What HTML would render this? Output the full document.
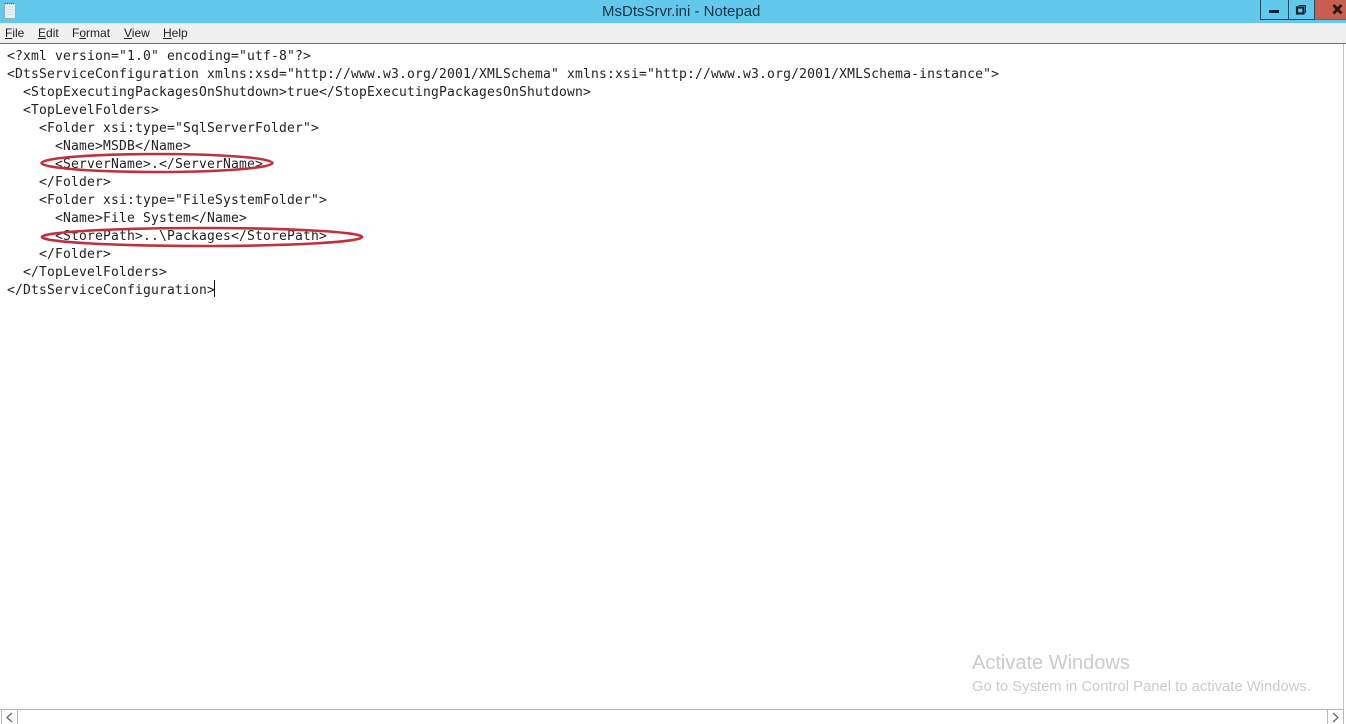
<!DOCTYPE html>
<html>
<head>
<meta charset="utf-8">
<style>
html,body{margin:0;padding:0;background:#fff}
#w{position:relative;width:1346px;height:724px;overflow:hidden;background:#fff;font-family:"Liberation Sans",sans-serif}
.a{position:absolute}
#title{left:0;top:0;width:1346px;height:23px;background:#62c9ec}
#tt{left:602px;top:3px;font-size:15px;line-height:18px;color:#123344;white-space:nowrap}
#menu{left:0;top:23px;width:1346px;height:20px;background:#f0f0f0}
#rule{left:0;top:43px;width:1346px;height:1px;background:#5d7280}
.m{position:absolute;top:26px;font-size:12px;line-height:14px;color:#222;white-space:nowrap}
.m u{text-decoration:underline}
.l{position:absolute;left:7px;font-family:"DejaVu Sans Mono",monospace;font-size:13px;letter-spacing:.174px;line-height:18px;color:#222;white-space:pre}
#caret{left:214px;top:280px;width:1px;height:17px;background:#111}
.b{position:absolute;top:0;height:20px;box-sizing:border-box}
#aw{left:972px;top:651px;font-size:20px;line-height:24px;color:#cbcbcb;white-space:nowrap}
#ag{left:972px;top:678px;font-size:14.8px;line-height:18px;color:#cbcbcb;white-space:nowrap}
</style>
</head>
<body>
<div id="w">
<div class="a" id="title"></div>
<svg class="a" style="left:3px;top:2px" width="14" height="18" viewBox="0 0 14 18">
<rect x="1.500" y="1.500" width="11" height="15" fill="#e6f3f2" stroke="#8fb0b8"/>
<path d="M2 1.500h10" stroke="#55656c" stroke-width="1.500" stroke-dasharray="1 1"/>
<path d="M3.500 5h7M3.500 7.500h7M3.500 10h7M3.500 12.500h7" stroke="#cfe0e3"/>
</svg>
<div class="a" id="tt">MsDtsSrvr.ini - Notepad</div>
<div class="b" style="left:1260px;width:29px;background:#62c9ec;border:1px solid #1c4f66;border-top:0"></div>
<div class="b" style="left:1289px;width:26px;background:#62c9ec;border-right:1px solid #1c4f66;border-bottom:1px solid #1c4f66"></div>
<div class="b" style="left:1315px;width:31px;background:#c75f50;border-bottom:1px solid #8f5048"></div>
<svg class="a" style="left:1260px;top:0" width="86" height="20" viewBox="0 0 86 20">
<path d="M9 11.500h10" stroke="#0c2230" stroke-width="3"/>
<rect x="37" y="7.500" width="6.500" height="6" fill="none" stroke="#0c2230" stroke-width="2.200"/>
<path d="M38.500 5.500h7v7.500" fill="none" stroke="#0c2230" stroke-width="1"/>
<path d="M73.500 5l8 8.500M81.500 5l-8 8.500" stroke="#2a1512" stroke-width="2.800"/>
</svg>
<div class="a" id="menu"></div>
<div class="a" id="rule"></div>
<div class="m" style="left:5px"><u>F</u>ile</div>
<div class="m" style="left:38px"><u>E</u>dit</div>
<div class="m" style="left:72px">F<u>o</u>rmat</div>
<div class="m" style="left:124px"><u>V</u>iew</div>
<div class="m" style="left:163px"><u>H</u>elp</div>

<div class="l" style="top:48px">&lt;?xml version="1.0" encoding="utf-8"?&gt;</div>
<div class="l" style="top:66px">&lt;DtsServiceConfiguration xmlns:xsd="http://www.w3.org/2001/XMLSchema" xmlns:xsi="http://www.w3.org/2001/XMLSchema-instance"&gt;</div>
<div class="l" style="top:84px">  &lt;StopExecutingPackagesOnShutdown&gt;true&lt;/StopExecutingPackagesOnShutdown&gt;</div>
<div class="l" style="top:102px">  &lt;TopLevelFolders&gt;</div>
<div class="l" style="top:120px">    &lt;Folder xsi:type="SqlServerFolder"&gt;</div>
<div class="l" style="top:138px">      &lt;Name&gt;MSDB&lt;/Name&gt;</div>
<div class="l" style="top:156px">      &lt;ServerName&gt;.&lt;/ServerName&gt;</div>
<div class="l" style="top:174px">    &lt;/Folder&gt;</div>
<div class="l" style="top:192px">    &lt;Folder xsi:type="FileSystemFolder"&gt;</div>
<div class="l" style="top:210px">      &lt;Name&gt;File System&lt;/Name&gt;</div>
<div class="l" style="top:228px">      &lt;StorePath&gt;..\Packages&lt;/StorePath&gt;</div>
<div class="l" style="top:246px">    &lt;/Folder&gt;</div>
<div class="l" style="top:264px">  &lt;/TopLevelFolders&gt;</div>
<div class="l" style="top:282px">&lt;/DtsServiceConfiguration&gt;</div>
<div class="a" id="caret"></div>

<svg class="a" style="left:0;top:0" width="400" height="260" viewBox="0 0 400 260">
<ellipse cx="157" cy="163" rx="115.500" ry="9" fill="none" stroke="#c2303c" stroke-width="2.600"/>
<ellipse cx="202" cy="237" rx="160" ry="9" fill="none" stroke="#c2303c" stroke-width="2.600"/>
</svg>

<div class="a" id="aw">Activate Windows</div>
<div class="a" id="ag">Go to System in Control Panel to activate Windows.</div>

<div class="a" style="left:1343px;top:44px;width:1px;height:666px;background:#c4c4c4"></div>
<div class="a" style="left:0;top:709px;width:1344px;height:1px;background:#b8b8b8"></div>
<div class="a" style="left:1px;top:710px;width:1px;height:14px;background:#b8b8b8"></div>
<div class="a" style="left:17px;top:710px;width:1px;height:14px;background:#b8b8b8"></div>
<div class="a" style="left:1327px;top:710px;width:1px;height:14px;background:#b8b8b8"></div>
<div class="a" style="left:1343px;top:710px;width:1px;height:14px;background:#b8b8b8"></div>
<svg class="a" style="left:0;top:710px" width="20" height="14" viewBox="0 0 20 14"><path d="M12 3L7 7.500l5 4.500" fill="none" stroke="#666" stroke-width="1.300"/></svg>
<svg class="a" style="left:1326px;top:710px" width="20" height="14" viewBox="0 0 20 14"><path d="M7 3l5 4.500-5 4.500" fill="none" stroke="#666" stroke-width="1.300"/></svg>
</div>
</body>
</html>
